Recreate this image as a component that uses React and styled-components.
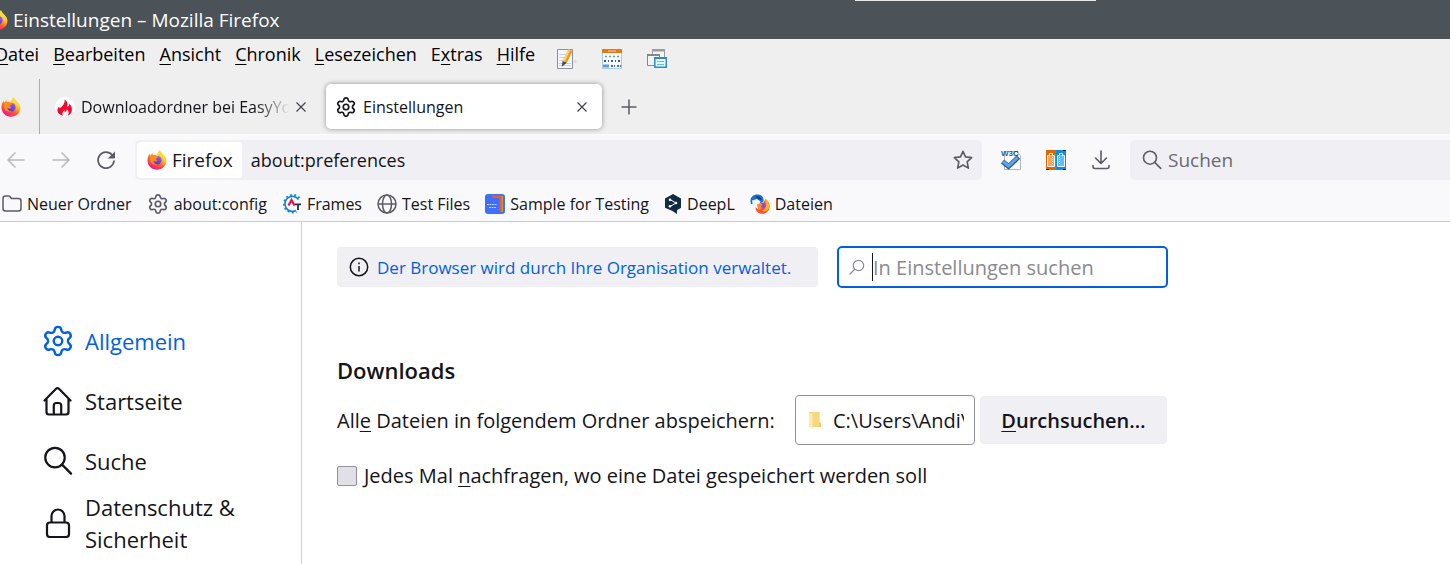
import React, { useId } from "react";
import styled, { createGlobalStyle } from "styled-components";
import { Settings } from "lucide-react";

const bookmarks = [
  { name: "Neuer Ordner", icon: <FolderIcon /> },
  { name: "about:config", icon: <Settings size={22} strokeWidth={1.8} color="#5b5b66" /> },
  { name: "Frames", icon: <FramesIcon /> },
  { name: "Test Files", icon: <GlobeIcon /> },
  { name: "Sample for Testing", icon: <SampleIcon /> },
  { name: "DeepL", icon: <DeepLIcon /> },
  { name: "Dateien", icon: <FilesIcon /> },
];

const menus = [
  ["", "D", "atei"],
  ["", "B", "earbeiten"],
  ["", "A", "nsicht"],
  ["", "C", "hronik"],
  ["", "L", "esezeichen"],
  ["E", "x", "tras"],
  ["", "H", "ilfe"],
];

function App() {
  return (
    <Window>
      <GlobalStyle />
      <TitleBar>
        <TopEdge />
        <FirefoxIcon size={20} />
        <span>Einstellungen – Mozilla Firefox</span>
      </TitleBar>
      <MenuBar>
        {menus.map(([before, key, after]) => (
          <MenuButton key={key + after}>
            {before}
            <u>{key}</u>
            {after}
          </MenuButton>
        ))}
        <MenuTools>
          <ToolButton aria-label="Notizen">
            <NoteIcon />
          </ToolButton>
          <ToolButton aria-label="Kalender">
            <CalendarIcon />
          </ToolButton>
          <ToolButton aria-label="Fenster">
            <WindowsIcon />
          </ToolButton>
        </MenuTools>
      </MenuBar>
      <TabBar>
        <PinnedTab aria-label="Firefox">
          <FirefoxIcon size={20} />
        </PinnedTab>
        <Tab>
          <FlameIcon />
          <TabTitle $fade>Downloadordner bei EasyYounger</TabTitle>
          <CloseButton aria-label="Tab schließen">
            <CloseIcon />
          </CloseButton>
        </Tab>
        <Tab $active>
          <Settings size={22} strokeWidth={1.8} color="#15141a" />
          <TabTitle>Einstellungen</TabTitle>
          <CloseButton aria-label="Tab schließen">
            <CloseIcon />
          </CloseButton>
        </Tab>
        <NewTab aria-label="Neuer Tab">
          <svg width="16" height="16" fill="none" stroke="#5b5b66" strokeWidth="1.5">
            <path d="M8 .5v15M.5 8h15" />
          </svg>
        </NewTab>
      </TabBar>
      <NavBar>
        <NavButtons>
          <ToolButton aria-label="Zurück">
            <ArrowIcon />
          </ToolButton>
          <ToolButton aria-label="Vor">
            <ArrowIcon forward />
          </ToolButton>
          <ToolButton aria-label="Neu laden">
            <ReloadIcon />
          </ToolButton>
        </NavButtons>
        <UrlBar>
          <Identity>
            <FirefoxIcon size={20} />
            Firefox
          </Identity>
          <UrlInput aria-label="Adresse" defaultValue="about:preferences" />
          <ToolButton aria-label="Lesezeichen hinzufügen">
            <StarIcon />
          </ToolButton>
        </UrlBar>
        <NavTools>
          <ToolButton aria-label="W3C">
            <W3cIcon />
          </ToolButton>
          <ToolButton aria-label="Vergleichen">
            <CompareIcon />
          </ToolButton>
          <ToolButton aria-label="Downloads">
            <DownloadIcon />
          </ToolButton>
        </NavTools>
        <SearchBar>
          <SearchIcon size={20} color="#5b5b66" width={1.6} />
          <SearchInput aria-label="Suchen" placeholder="Suchen" />
        </SearchBar>
      </NavBar>
      <BookmarkBar>
        {bookmarks.map((b) => (
          <Bookmark href="#" key={b.name}>
            {b.icon}
            {b.name}
          </Bookmark>
        ))}
      </BookmarkBar>
      <Page>
        <Sidebar>
          <Category href="#general" $selected>
            <Settings size={34} strokeWidth={1.7} />
            <span>Allgemein</span>
          </Category>
          <Category href="#home">
            <HomeIcon />
            <span>Startseite</span>
          </Category>
          <Category href="#search">
            <SearchIcon size={30} color="currentColor" width={1.5} />
            <span>Suche</span>
          </Category>
          <Category href="#privacy">
            <LockIcon />
            <span>Datenschutz & Sicherheit</span>
          </Category>
        </Sidebar>
        <Content>
          <TopRow>
            <Notice>
              <InfoIcon />
              <a href="#policies">Der Browser wird durch Ihre Organisation verwaltet.</a>
            </Notice>
            <FindBox>
              <FindIcon />
              <Caret />
              <FindInput aria-label="In Einstellungen suchen" placeholder="In Einstellungen suchen" />
            </FindBox>
          </TopRow>
          <Heading>Downloads</Heading>
          <FolderRow>
            <FolderLabel htmlFor="folder">
              All<u>e</u> Dateien in folgendem Ordner abspeichern:
            </FolderLabel>
            <PathBox>
              <YellowFolder />
              <PathInput id="folder" readOnly value="C:\Users\Andi\Downloads" />
            </PathBox>
            <BrowseButton>
              <u>D</u>urchsuchen…
            </BrowseButton>
          </FolderRow>
          <AskRow>
            <CheckBox type="checkbox" id="ask" />
            <label htmlFor="ask">
              Jedes Mal <u>n</u>achfragen, wo eine Datei gespeichert werden soll
            </label>
          </AskRow>
        </Content>
      </Page>
    </Window>
  );
}

export default App;

function FirefoxIcon({ size }) {
  const id = useId();
  return (
    <svg width={size} height={size} viewBox="0 0 20 20">
      <defs>
        <linearGradient id={id + "a"} x1="16" y1="2" x2="5" y2="19" gradientUnits="userSpaceOnUse">
          <stop offset="0" stopColor="#fff44f" />
          <stop offset=".35" stopColor="#ffb829" />
          <stop offset=".62" stopColor="#ff5a36" />
          <stop offset="1" stopColor="#e9148c" />
        </linearGradient>
        <linearGradient id={id + "b"} x1="12" y1="6" x2="8" y2="14" gradientUnits="userSpaceOnUse">
          <stop offset="0" stopColor="#9059ff" />
          <stop offset="1" stopColor="#5b3bb8" />
        </linearGradient>
      </defs>
      <path
        fill={`url(#${id}a)`}
        d="M13 .3c.3 1.6 1.3 2.4 2.5 3.7 2.3 2 3.8 4 3.9 6.5C19.5 15.7 15.4 19.7 10 19.7S.5 15.6.5 10.5C.5 8 1.4 5.4 2.7 3.4c.1 1 .3 1.7.7 2.1C4 4.3 5 3.3 5.5 2.9c.1.9.5 1.6.9 2 1.3-.3 2.3-.2 3.3.1C10.3 3.3 11.5 1.3 13 .3z"
      />
      <circle cx="10.3" cy="10.2" r="4.3" fill={`url(#${id}b)`} />
      <path fill="#ff8a1f" d="M3.5 6C5.5 4.5 8 5 9.5 6c1 .3 1.9.3 1.9.8-.2.9-1.6 1.2-2.3 1.9-.4.9.5 1.5 1.4 1.7-1 1.8-3.3 1.2-4.3 0 .2 2.4 2 3.7 4 4-3.500 1-7.200-1.200-7.500-4.400C2.600 8.500 3 7 3.500 6z" />
      <path fill="#ffd93b" d="M13 .3c.3 1.600 1.300 2.400 2.500 3.700 2 2 2.700 4.500 1.900 7.500-.3-2.500-1.500-4.300-3.400-5.200-1.300-.9-2.600-1.200-4-1.200C10.500 3.300 11.500 1.300 13 .3z" />
    </svg>
  );
}

function FlameIcon() {
  return (
    <svg width="20" height="20" viewBox="0 0 20 20">
      <circle cx="10" cy="10" r="10" fill="#fff" />
      <path
        fill="#f5082e"
        d="M9.600 2.500c3.200 2.300 3.400 4.600 2.200 6.800l1.200.5c1-.9 1.300-2 1-3.300 3.600 3 3.900 7.800.8 11l-2.100 1.200c1.500-2.200 1.400-4.200-.9-6.400-.2 1.700-.9 2.700-2.300 3.300.3-1 .2-1.700-.1-2.400-1.800 1.300-2.600 3.200-1.500 5.600C1.900 17.300 1.200 12.700 4 9.600l.7 1.700C7.800 9 10.200 6.200 9.600 2.500z"
      />
    </svg>
  );
}

function CloseIcon() {
  return (
    <svg width="12" height="12" fill="none" stroke="#45444d" strokeWidth="1.2">
      <path d="M1.500 1.500l9 9M10.500 1.500l-9 9" />
    </svg>
  );
}

function NoteIcon() {
  return (
    <svg width="20" height="20" viewBox="0 0 20 20">
      <path fill="#f4f7fc" stroke="#8790a6" d="M.5.5h15v19H.5z" />
      <path stroke="#c6d2e6" d="M2 5.500h10M2 8.500h8M2 11.500h7M2 14.500h12M2 16.500h12" />
      <path fill="#f7941d" d="M11.500.5l4 1.300-5.700 12-4.200-1.800z" />
      <path fill="#ffd55c" d="M11.500.5l1.800.6-5.700 12-2-1.100z" />
      <path fill="#4a4650" d="M5.600 12l4.200 1.800-5 4z" />
      <circle cx="18" cy="12.500" r="1.500" fill="#d9d9dd" />
    </svg>
  );
}

function CalendarIcon() {
  return (
    <svg width="20" height="20" viewBox="0 0 20 20">
      <path fill="#f7fbff" stroke="#a8c8e8" d="M.5.5h19v19H.5z" />
      <path fill="#e77817" d="M0 0h20v4H0z" />
      <path stroke="#ffc98f" d="M6 2h8" />
      <path stroke="#6a98c8" strokeWidth="1.500" strokeDasharray="2 2" d="M3 7.500h14" />
      <path stroke="#2f5f9c" strokeWidth="2" strokeDasharray="2 2 1 2" d="M2 12h17" />
      <path stroke="#6a98c8" strokeWidth="3" d="M1 17h6" />
      <path stroke="#3f6ea8" strokeWidth="2" strokeDasharray="2 1 1 2" d="M9 17h10" />
    </svg>
  );
}

function WindowsIcon() {
  return (
    <svg width="20" height="20" viewBox="0 0 20 20" fill="#f2f5f7">
      <path stroke="#9b9da0" d="M5.500.5h12v9h-12z" />
      <path stroke="#9b9da0" strokeWidth="2" d="M5 1.500h13" />
      <path stroke="#85888b" d="M.5 5.500h12v11H.5z" />
      <path stroke="#85888b" strokeWidth="2" d="M0 6h13" />
      <path fill="#e3f5fd" stroke="#2d8dbd" strokeWidth="1.500" d="M7.800 8.800h11.500v9.500H7.800z" />
      <path stroke="#2d8dbd" strokeWidth="2" d="M7 9h13" />
      <path stroke="#65bde4" d="M10 12.500h7M10 15.500h7" />
    </svg>
  );
}

function ArrowIcon({ forward }) {
  return (
    <svg width="20" height="20" fill="none" stroke="#b9b9be" strokeWidth="1.600" strokeLinecap="round" strokeLinejoin="round">
      <path d={forward ? "M2 10h16M11 3l7 7-7 7" : "M18 10H2M9 3l-7 7 7 7"} />
    </svg>
  );
}

function ReloadIcon() {
  return (
    <svg width="20" height="20" fill="none" stroke="#5b5b66" strokeWidth="1.700" strokeLinecap="round">
      <path d="M16.200 5A8 8 0 1 0 18 11" />
      <path fill="#5b5b66" stroke="none" d="M19 1.500v6.200q0 .8-.8.8h-6.400z" />
    </svg>
  );
}

function StarIcon() {
  return (
    <svg width="20" height="20" fill="none" stroke="#5b5b66" strokeWidth="1.600" strokeLinejoin="round">
      <path d="M10 1.300l2.500 5.600 6.200.7-4.600 4.200 1.300 6.300-5.400-3.100-5.400 3.100 1.300-6.300L1.300 7.600l6.200-.7z" />
    </svg>
  );
}

function W3cIcon() {
  return (
    <svg width="20" height="20" viewBox="0 0 20 20">
      <path fill="#fff" stroke="#b5b8bc" d="M3.500 1.500h12l4 4v14h-16z" />
      <text x="0" y="6" fontFamily="Liberation Sans" fontWeight="700" fontSize="8" fill="#1d66a8">
        W3<tspan fill="#333">C</tspan>
      </text>
      <path fill="none" stroke="#285f9f" strokeWidth="5" d="M1.500 11.500l6 5L17.500 7" />
      <path fill="none" stroke="#5fa3e0" strokeWidth="3" d="M2 11.500l5.500 4.500 9-8.500" />
    </svg>
  );
}

function CompareIcon() {
  return (
    <svg width="20" height="20" viewBox="0 0 20 20" fill="none">
      <path fill="#df6500" d="M0 0h10v20H0z" />
      <path fill="#0a8ceb" d="M10 0h10v20H10z" />
      <path fill="#f7a55d" d="M2 5h6v11H2z" />
      <path fill="#62bcff" d="M12 5h6v11h-6z" />
      <path stroke="#fff" d="M1.500 5.500h2v-2h3v2h2v11h-7zM11.500 5.500h2v-2h3v2h2v11h-7z" />
      <path stroke="#fff" strokeDasharray="1 1" d="M6.500 7v8M13.500 7v8" />
      <path stroke="#222" d="M0 19.500h3M17 19.500h3M17 .5h3" />
    </svg>
  );
}

function DownloadIcon() {
  return (
    <svg width="20" height="20" fill="none" stroke="#5b5b66" strokeWidth="1.600" strokeLinecap="round" strokeLinejoin="round">
      <path d="M10 1v12M4.500 8l5.500 5.500L15.500 8M2 15.500v1q0 2 2 2h12q2 0 2-2v-1" />
    </svg>
  );
}

function SearchIcon({ size, color, width }) {
  return (
    <svg width={size} height={size} viewBox="0 0 20 20" fill="none" stroke={color} strokeWidth={width} strokeLinecap="round">
      <circle cx="8" cy="7.700" r="6.500" />
      <path d="M12.700 12.400l6 6" />
    </svg>
  );
}

function FolderIcon() {
  return (
    <svg width="20" height="20" fill="none" stroke="#5b5b66" strokeWidth="1.500" strokeLinejoin="round">
      <path d="M1 14.500v-10q0-2.500 2.500-2.500h3q1 0 1.700.8l1.300 1.700h7q2.500 0 2.500 2.500v7.500q0 2.500-2.500 2.500h-13q-2.500 0-2.500-2.500z" />
    </svg>
  );
}

function FramesIcon() {
  return (
    <svg width="20" height="20" viewBox="0 0 20 20" fill="none">
      <path stroke="#1386cf" strokeWidth="1.600" d="M16.500 5.500A7.500 7.500 0 1 0 14 16.500" />
      <path stroke="#1386cf" strokeWidth="2" strokeDasharray="1.800 2.400" d="M17.500 4A8.800 8.800 0 1 0 14.500 17.800" />
      <path stroke="#e2134e" strokeWidth="2.200" d="M6.500 11.500L9.500 6l3 5.500" />
      <path stroke="#223249" strokeWidth="1.800" d="M13 10.300h6M16 10.300V16" />
    </svg>
  );
}

function GlobeIcon() {
  return (
    <svg width="20" height="20" fill="none" stroke="#5b5b66" strokeWidth="1.500">
      <circle cx="10" cy="10" r="9" />
      <ellipse cx="10" cy="10" rx="4.500" ry="9" />
      <path d="M1 10h18" />
    </svg>
  );
}

function SampleIcon() {
  return (
    <svg width="20" height="20" viewBox="0 0 20 20" fill="none">
      <rect width="20" height="20" rx="3" fill="#3f6fff" />
      <path stroke="#2c9b54" strokeWidth="1.500" d="M10 2h8.500v16" />
      <path stroke="#f29b1d" strokeWidth="1.500" d="M8 2.800h9V18" />
      <path stroke="#ef5a28" strokeWidth="2" d="M7 2.500h8.500V17" />
      <path stroke="#bcd0ff" strokeDasharray="2 .5" d="M2 10.500h10M4 13.500h7" />
    </svg>
  );
}

function DeepLIcon() {
  return (
    <svg width="18" height="20" viewBox="0 0 18 20">
      <path fill="#0f2b46" d="M9 0l8 4.500v9.300l-4 2.500V20l-5-3.200-7-3V4.500z" />
      <path fill="none" stroke="#fff" strokeWidth="1" d="M6 5.500l6 3.500-6 3.500" />
      <circle cx="6" cy="5.700" r="1.300" fill="#fff" />
      <circle cx="12" cy="9" r="1.300" fill="#fff" />
      <circle cx="6" cy="12.300" r="1.300" fill="#fff" />
    </svg>
  );
}

function FilesIcon() {
  return (
    <svg width="20" height="20" viewBox="0 0 20 20">
      <path fill="#1c70c8" d="M1 10C-1 4 3 0 8 .5c4 .3 6 3 5.500 7L9 10z" />
      <path fill="#eef4fb" d="M2 6.500l5-1.500L10.500 7.500l-2 5H3z" />
      <path fill="#143f86" d="M5 1.500l5 1.500 2 3-4-1z" />
      <path fill="#ff5136" d="M15.500 5c3 2 4.500 5 4 8.500-.6 4-3.700 6.500-7.500 6.300-4-.2-6.600-3-6.500-6.800 1.500 2 3 2.500 4.500 2.200z" />
      <path fill="#ffb31f" d="M15 4.500c3.500 2.500 5.500 6.500 3.500 10.500-1.500 2.500-4.500 3-6.500 1.500 3-1 4.500-3.500 4-6z" />
      <circle cx="12.500" cy="11.500" r="3" fill="#8e4be0" />
      <path fill="#ff8a1f" d="M7 10.500l3.500-1.500 2 1.500-1.500 1.500 1 2.500-4 1z" />
    </svg>
  );
}

function HomeIcon() {
  return (
    <svg width="30" height="30" fill="none" stroke="currentColor" strokeWidth="2.200" strokeLinecap="round" strokeLinejoin="round">
      <path d="M1.500 14.500L12.800 3q1.700-1.600 3.400 0L27.500 14.500M3.500 13v13q0 2.500 2.500 2.500h17q2.500 0 2.500-2.500V13" />
      <path d="M10.800 28v-8.500q0-2.500 2.500-2.500h2.400q2.500 0 2.500 2.500V28" />
    </svg>
  );
}

function LockIcon() {
  return (
    <svg width="30" height="30" fill="none" stroke="currentColor" strokeWidth="2.200">
      <rect x="4" y="14.500" width="22" height="14.500" rx="3" />
      <path d="M8.500 14.500V8a6.500 6.500 0 0 1 13 0v6.500" />
    </svg>
  );
}

function InfoIcon() {
  return (
    <svg width="20" height="20" fill="none" stroke="#15141a" strokeWidth="1.500">
      <circle cx="10" cy="10" r="8.700" />
      <path d="M10 9v5.500M10 5.500v1.800" />
    </svg>
  );
}

function FindIcon() {
  return (
    <svg width="16" height="16" fill="none" stroke="#8a8a8f" strokeWidth="1.200" strokeLinecap="round">
      <circle cx="9.500" cy="6.500" r="5.200" />
      <path d="M5.500 10.500L1 15" />
    </svg>
  );
}

function YellowFolder() {
  return (
    <svg width="14" height="18" viewBox="0 0 14 18">
      <path fill="#f2c95c" d="M1 1h10.500v10l1.500 1v4H1z" />
      <path fill="#f7d87c" d="M4 1h7v15H4z" />
      <path fill="#fdecb3" d="M1 1l3.500 2v15L1 16z" />
    </svg>
  );
}

const GlobalStyle = createGlobalStyle`
  * {
    box-sizing: border-box;
  }
  body {
    margin: 0;
    background: #fff;
    color: #15141a;
    font-family: "Open Sans", "Noto Sans", sans-serif;
    font-size: 20px;
    font-weight: 400;
    overflow: hidden;
  }
  button, input {
    font: inherit;
    color: inherit;
    border: 0;
    padding: 0;
    margin: 0;
    background: none;
  }
  a {
    color: inherit;
    text-decoration: none;
  }
  svg {
    display: block;
    flex-shrink: 0;
  }
  u {
    text-decoration-thickness: 1px;
    text-underline-offset: 3px;
  }
`;

const Window = styled.div`
  display: flex;
  flex-direction: column;
  height: 100vh;
  min-width: 1200px;
`;

const TitleBar = styled.header`
  position: relative;
  display: flex;
  align-items: center;
  gap: 5px;
  height: 39px;
  margin-left: -12px;
  flex-shrink: 0;
  background: #4b5358;
  color: #fff;
  font-size: 19px;
`;

const TopEdge = styled.div`
  position: absolute;
  top: 0;
  right: 354px;
  width: 241px;
  height: 1px;
  background: #e8e8e8;
`;

const MenuBar = styled.nav`
  display: flex;
  align-items: flex-start;
  gap: 14px;
  height: 40px;
  margin-left: -5px;
  padding-top: 3px;
  flex-shrink: 0;
  background: #efefef;
`;

const MenuButton = styled.button`
  font-size: 18px;
  line-height: 24px;
  color: #000;
`;

const MenuTools = styled.div`
  display: flex;
  gap: 25px;
  padding: 7px 0 0 8px;
`;

const ToolButton = styled.button`
  display: flex;
`;

const TabBar = styled.div`
  display: flex;
  align-items: stretch;
  height: 55px;
  flex-shrink: 0;
  background: #efefef;
  font-size: 16px;
`;

const PinnedTab = styled.button`
  width: 40px;
  padding-left: 1px;
  border-right: 1px solid #adadad;
`;

const Tab = styled.div`
  display: flex;
  align-items: center;
  width: ${(p) => (p.$active ? "276px" : "272px")};
  gap: 6px;
  margin: ${(p) => (p.$active ? "5px 0" : "5px 8px 5px 6px")};
  padding: 0 ${(p) => (p.$active ? "14px" : "11px")} 0 9px;
  border-radius: 5px;
  background: ${(p) => (p.$active ? "#fff" : "transparent")};
  box-shadow: ${(p) => (p.$active ? "0 0 5px rgba(0, 0, 0, 0.4)" : "none")};
`;

const TabTitle = styled.span`
  flex: 1;
  min-width: 0;
  overflow: hidden;
  white-space: nowrap;
  mask-image: ${(p) => (p.$fade ? "linear-gradient(to left, transparent, #000 32px)" : "none")};
`;

const CloseButton = styled.button`
  display: flex;
`;

const NewTab = styled.button`
  display: flex;
  align-items: center;
  margin-left: 19px;
`;

const NavBar = styled.div`
  display: flex;
  align-items: center;
  height: 52px;
  flex-shrink: 0;
  background: #f9f9fb;
`;

const NavButtons = styled.div`
  display: flex;
  gap: 25px;
  padding: 0 19px 0 6px;
`;

const UrlBar = styled.div`
  display: flex;
  align-items: center;
  flex: 1;
  height: 40px;
  padding: 2px 9px 2px 2px;
  border-radius: 5px;
  background: #f0f0f4;
`;

const Identity = styled.button`
  display: flex;
  align-items: center;
  gap: 5px;
  height: 36px;
  padding: 0 9px 0 10px;
  border-radius: 4px;
  background: #fff;
  font-size: 19px;
`;

const UrlInput = styled.input`
  flex: 1;
  min-width: 0;
  padding-left: 9px;
  font-size: 18px;
  outline: none;
`;

const NavTools = styled.div`
  display: flex;
  gap: 25px;
  padding: 0 19px;
`;

const SearchBar = styled.div`
  display: flex;
  align-items: center;
  gap: 6px;
  width: 320px;
  height: 40px;
  padding-left: 12px;
  border-radius: 5px 0 0 5px;
  background: #f0f0f4;
`;

const SearchInput = styled.input`
  flex: 1;
  min-width: 0;
  font-size: 19px;
  outline: none;
  &::placeholder {
    color: #6a6a72;
    opacity: 1;
  }
`;

const BookmarkBar = styled.div`
  display: flex;
  align-items: center;
  gap: 15px;
  height: 36px;
  padding-left: 2px;
  flex-shrink: 0;
  background: #f9f9fb;
  border-bottom: 1px solid #cccccf;
`;

const Bookmark = styled.a`
  display: flex;
  align-items: center;
  gap: 5px;
  font-size: 16px;
  white-space: nowrap;
`;

const Page = styled.main`
  display: flex;
  flex: 1;
  min-height: 0;
`;

const Sidebar = styled.nav`
  display: flex;
  flex-direction: column;
  width: 302px;
  flex-shrink: 0;
  padding: 89px 40px 0 41px;
  border-right: 1px solid #cfcfd3;
`;

const Category = styled.a`
  display: flex;
  align-items: center;
  gap: 10px;
  min-height: 60px;
  font-size: 22px;
  line-height: 32px;
  color: ${(p) => (p.$selected ? "#0061e0" : "#15141a")};

  svg {
    width: 34px;
    padding: ${(p) => (p.$selected ? "0" : "0 2px")};
  }
`;

const Content = styled.section`
  width: 866px;
  padding: 24px 0 0 35px;
`;

const TopRow = styled.div`
  display: flex;
  align-items: center;
  gap: 19px;
`;

const Notice = styled.div`
  display: flex;
  align-items: center;
  flex: 1;
  gap: 8px;
  height: 40px;
  padding-left: 12px;
  border-radius: 4px;
  background: #f0f0f4;
  color: #0061e0;
  font-size: 17px;
  white-space: nowrap;
`;

const FindBox = styled.div`
  display: flex;
  align-items: center;
  width: 331px;
  height: 42px;
  padding-left: 10px;
  border: 2px solid #0061e0;
  border-radius: 5px;
`;

const Caret = styled.span`
  width: 1px;
  height: 28px;
  margin-left: 7px;
  background: #15141a;
`;

const FindInput = styled.input`
  flex: 1;
  min-width: 0;
  font-size: 20px;
  outline: none;
  &::placeholder {
    color: #8a8a8f;
    opacity: 1;
  }
`;

const Heading = styled.h2`
  margin: 66px 0 9px;
  font-size: 22px;
  line-height: 32px;
  font-weight: 600;
`;

const FolderRow = styled.div`
  display: flex;
  align-items: center;
  gap: 5px;
  padding-right: 1px;
`;

const FolderLabel = styled.label`
  flex: 1;
  white-space: nowrap;
`;

const PathBox = styled.div`
  display: flex;
  align-items: center;
  gap: 11px;
  width: 180px;
  height: 50px;
  padding: 0 10px 0 12px;
  border: 1px solid #8f8f9d;
  border-radius: 4px;
`;

const PathInput = styled.input`
  flex: 1;
  min-width: 0;
  outline: none;
`;

const BrowseButton = styled.button`
  width: 187px;
  height: 48px;
  border-radius: 4px;
  background: #f0f0f4;
  font-weight: 600;
`;

const AskRow = styled.div`
  display: flex;
  align-items: center;
  gap: 7px;
  margin-top: 15px;
  line-height: 32px;
`;

const CheckBox = styled.input`
  appearance: none;
  width: 20px;
  height: 20px;
  border: 1px solid #8f8f9d;
  border-radius: 2px;
  background: #e0e0e6;
`;
